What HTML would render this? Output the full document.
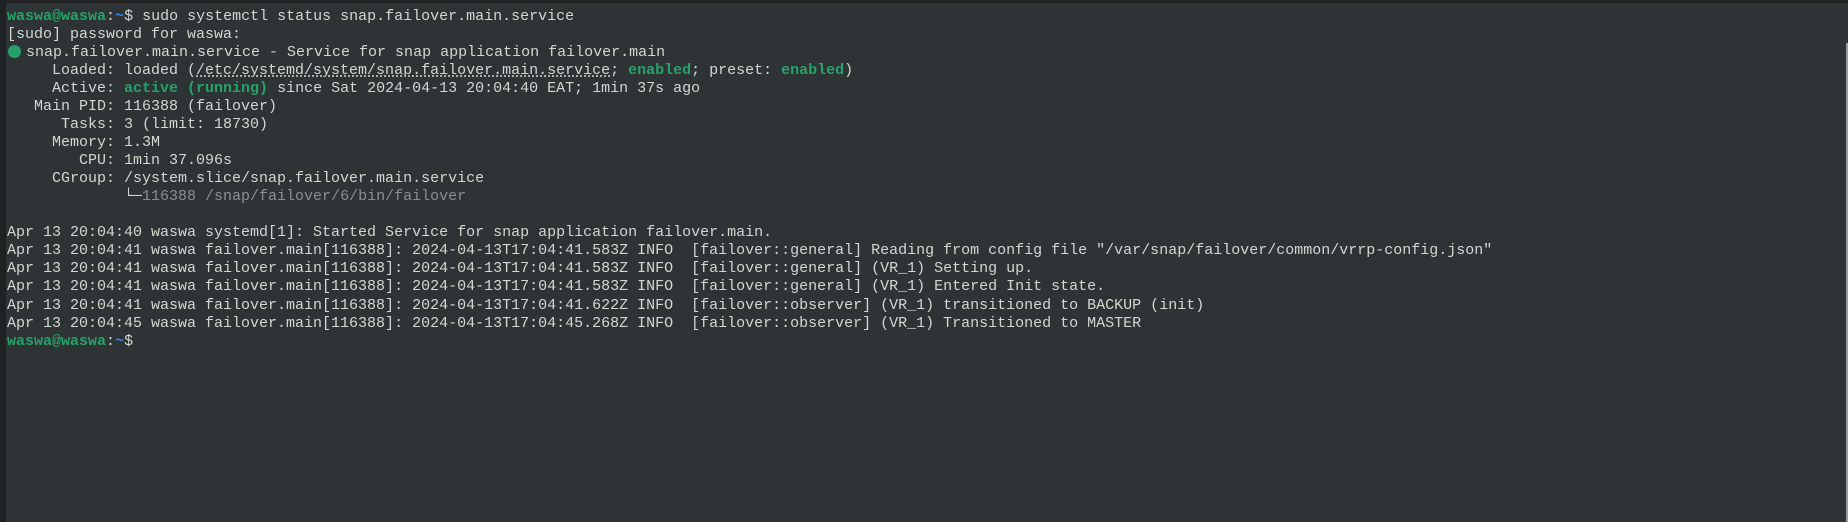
<!DOCTYPE html>
<html><head><meta charset="utf-8"><style>
html,body{margin:0;padding:0;width:1848px;height:522px;overflow:hidden;background:#2e3436;}
.top{position:absolute;left:0;top:0;width:1848px;height:3px;background:#222;}
.left{position:absolute;left:0;top:0;width:6px;height:522px;background:#1f2222;}
.right{position:absolute;left:1846px;top:43px;width:2px;height:479px;background:#9a9a9a;}
pre{position:absolute;left:7px;top:7.5px;margin:0;font-family:"Liberation Mono",monospace;font-size:15px;line-height:18.07px;color:#d3d7cf;}
.g{color:#26a269;font-weight:bold;}
.b{color:#3584e4;font-weight:bold;}
.gr{color:#8b8e8c;}
.u{text-decoration:underline dotted;text-underline-offset:2px;}
.dot{display:inline-block;width:13px;height:13px;border-radius:50%;background:#26a269;vertical-align:-2px;margin-right:5px;margin-left:1px;}
</style></head><body>
<div class="top"></div><div class="left"></div><div class="right"></div>
<pre><span class="g">waswa@waswa</span>:<span class="b">~</span>$ sudo systemctl status snap.failover.main.service
[sudo] password for waswa: 
<span class="dot"></span>snap.failover.main.service - Service for snap application failover.main
     Loaded: loaded (<span class="u">/etc/systemd/system/snap.failover.main.service</span>; <span class="g">enabled</span>; preset: <span class="g">enabled</span>)
     Active: <span class="g">active (running)</span> since Sat 2024-04-13 20:04:40 EAT; 1min 37s ago
   Main PID: 116388 (failover)
      Tasks: 3 (limit: 18730)
     Memory: 1.3M
        CPU: 1min 37.096s
     CGroup: /system.slice/snap.failover.main.service
             └─<span class="gr">116388 /snap/failover/6/bin/failover</span>

Apr 13 20:04:40 waswa systemd[1]: Started Service for snap application failover.main.
Apr 13 20:04:41 waswa failover.main[116388]: 2024-04-13T17:04:41.583Z INFO  [failover::general] Reading from config file "/var/snap/failover/common/vrrp-config.json"
Apr 13 20:04:41 waswa failover.main[116388]: 2024-04-13T17:04:41.583Z INFO  [failover::general] (VR_1) Setting up.
Apr 13 20:04:41 waswa failover.main[116388]: 2024-04-13T17:04:41.583Z INFO  [failover::general] (VR_1) Entered Init state.
Apr 13 20:04:41 waswa failover.main[116388]: 2024-04-13T17:04:41.622Z INFO  [failover::observer] (VR_1) transitioned to BACKUP (init)
Apr 13 20:04:45 waswa failover.main[116388]: 2024-04-13T17:04:45.268Z INFO  [failover::observer] (VR_1) Transitioned to MASTER
<span class="g">waswa@waswa</span>:<span class="b">~</span>$ </pre>
</body></html>
